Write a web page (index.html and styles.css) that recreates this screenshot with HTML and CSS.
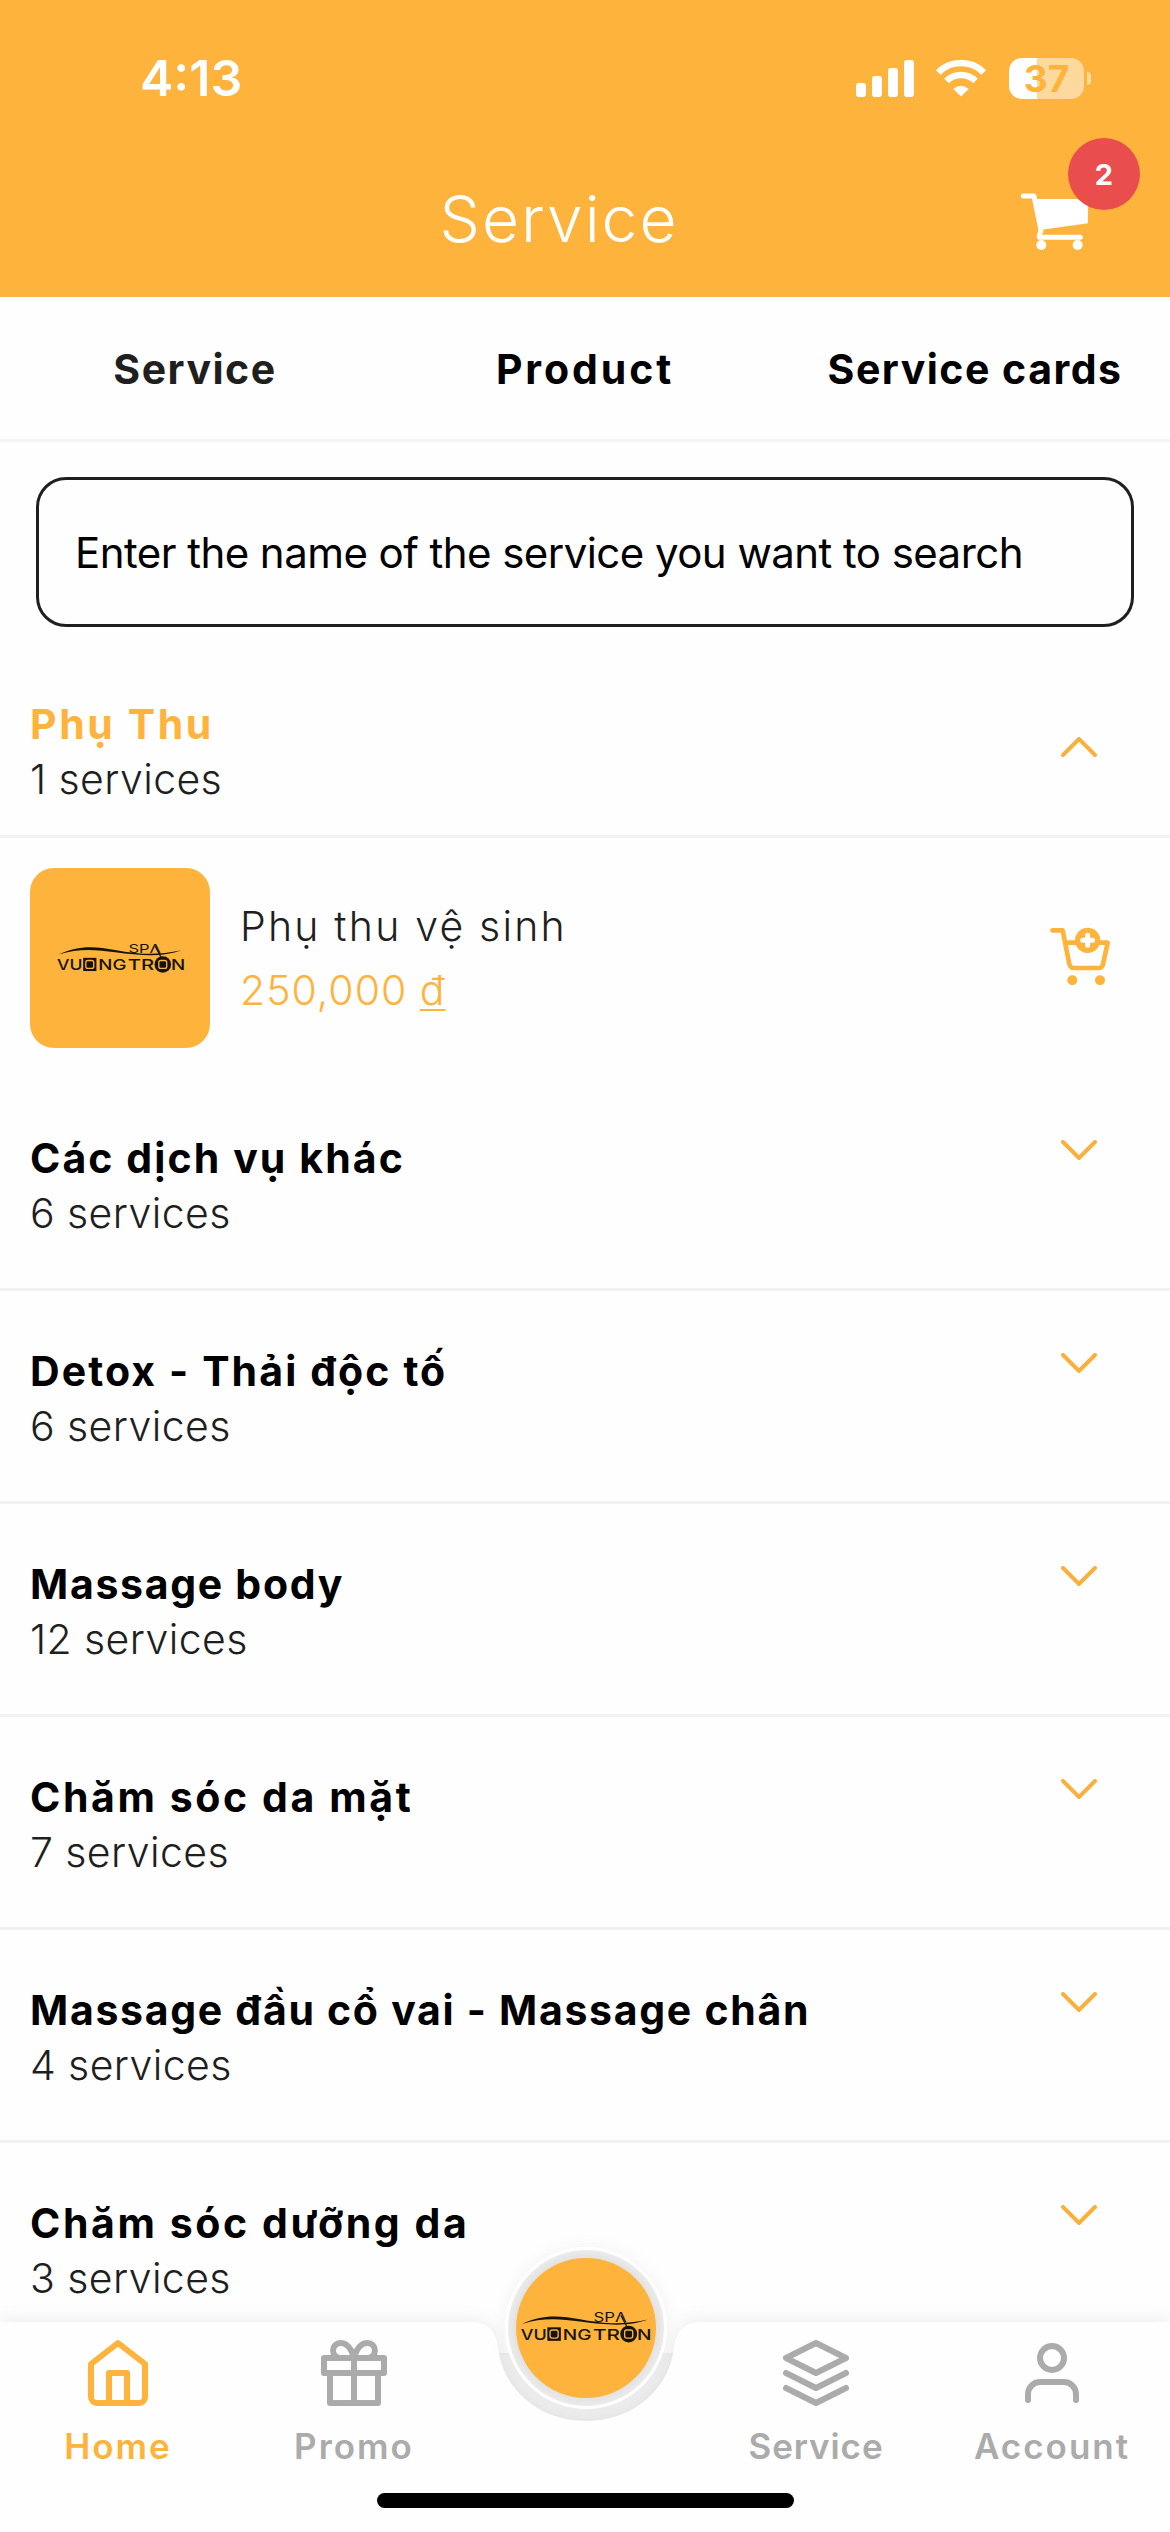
FILE: index.html
```html
<!DOCTYPE html>
<html lang="vi">
<head>
<meta charset="utf-8">
<title>Service</title>
<link rel="stylesheet" href="styles.css">
</head>
<body>
<div class="screen">
  <header class="header">
    <div class="status">
      <span class="time">4:13</span>
      <div class="indicators">
        <svg width="58" height="38" viewBox="0 0 58 38" fill="#fff"><rect y="24" width="10" height="14" rx="3"/><rect x="16" y="17" width="10" height="21" rx="3"/><rect x="32" y="9" width="10" height="29" rx="3"/><rect x="48" y="1" width="10" height="37" rx="3"/></svg>
        <svg class="wifi" width="50" height="38" viewBox="0 0 50 38"><g fill="none" stroke="#fff" stroke-width="6.5"><path d="M2.300 13.500A32 32 0 0 1 47.700 13.500"/><path d="M10.500 22A20.500 20.500 0 0 1 39.500 22"/></g><path d="M25 37.500L17.300 30Q25 23.500 32.700 30Z" fill="#fff"/></svg>
        <div class="battery"><span>37</span></div><i class="tip"></i>
      </div>
    </div>
    <div class="titlebar">
      <h1>Service</h1>
      <div class="cart">
        <svg width="71.300" height="60" viewBox="564 486 214 180"><g fill="none" stroke="#fff" stroke-width="15" stroke-linecap="round" stroke-linejoin="round"><path d="M577 498H609L630 601L625 618"/><path d="M625 622H748"/></g><path d="M612 507H771V580L632 599Z" fill="#fff"/><circle cx="631" cy="645" r="15" fill="#fff"/><circle cx="740" cy="645" r="15" fill="#fff"/></svg>
        <span class="badge">2</span>
      </div>
    </div>
  </header>
  <nav class="tabs"><span class="active">Service</span><span class="wider">Product</span><span>Service cards</span></nav>
  <div class="search"><span>Enter the name of the service you want to search</span></div>
  <main>
    <section class="row open"><div><h2 class="wider">Phụ Thu</h2><p>1 services</p></div><svg class="chev up" width="36" height="20" viewBox="0 0 36 20"><path d="M2 2L18 18L34 2"/></svg></section>
    <section class="item">
      <div class="thumb">
        <svg width="133" height="35" viewBox="44 92 400 106">
          <g id="logo">
            <path d="M54 133C110 104 165 108 225 119C300 133 350 136 426 120C370 142 300 136 225 126C165 117 110 114 54 133Z" fill="#17130a"/>
            <path d="M346 108L366 145" stroke="#17130a" stroke-width="4"/>
            <rect x="128" y="143" width="40" height="40" fill="#17130a"/>
            <circle cx="369" cy="163" r="25" fill="#17130a"/>
            <g class="logo-text">
              <text x="49" y="180" textLength="77" lengthAdjust="spacingAndGlyphs">VU</text>
              <text x="174" y="180" textLength="85" lengthAdjust="spacingAndGlyphs">NG</text>
              <text x="263" y="180" textLength="80" lengthAdjust="spacingAndGlyphs">TR</text>
              <text x="394" y="180" textLength="43" lengthAdjust="spacingAndGlyphs">N</text>
              <text class="logo-spa" x="265" y="127" textLength="98" lengthAdjust="spacingAndGlyphs">SPΛ</text>
            </g>
            <rect x="136" y="151" width="24" height="24" rx="6" fill="none" stroke="#feb33c" stroke-width="4"/>
            <rect x="357" y="151" width="24" height="24" rx="6" fill="none" stroke="#feb33c" stroke-width="4"/>
          </g>
        </svg>
      </div>
      <div class="info"><p class="name">Phụ thu vệ sinh</p><p class="price">250,000 <u>đ</u></p></div>
      <svg class="add" width="62" height="60" viewBox="147 681 186 180"><g fill="none" stroke="#feb33c" stroke-width="14" stroke-linecap="round" stroke-linejoin="round"><path d="M157 691H188L208 792Q211 804 222 804H297Q306 804 309 793L323 728H197"/></g><circle cx="263" cy="721" r="38" fill="#feb33c"/><path d="M263 706V736M248 721H278" stroke="#fff" stroke-width="15" stroke-linecap="round"/><g fill="#feb33c"><circle cx="217" cy="841" r="15"/><circle cx="300" cy="841" r="15"/></g></svg>
    </section>
    <section class="row"><div><h2>Các dịch vụ khác</h2><p>6 services</p></div><svg class="chev" width="36" height="20" viewBox="0 0 36 20"><path d="M2 2L18 18L34 2"/></svg></section>
    <section class="row"><div><h2>Detox - Thải độc tố</h2><p>6 services</p></div><svg class="chev" width="36" height="20" viewBox="0 0 36 20"><path d="M2 2L18 18L34 2"/></svg></section>
    <section class="row"><div><h2 class="tighter">Massage body</h2><p>12 services</p></div><svg class="chev" width="36" height="20" viewBox="0 0 36 20"><path d="M2 2L18 18L34 2"/></svg></section>
    <section class="row"><div><h2 class="wider">Chăm sóc da mặt</h2><p>7 services</p></div><svg class="chev" width="36" height="20" viewBox="0 0 36 20"><path d="M2 2L18 18L34 2"/></svg></section>
    <section class="row"><div><h2 class="tighter">Massage đầu cổ vai - Massage chân</h2><p>4 services</p></div><svg class="chev" width="36" height="20" viewBox="0 0 36 20"><path d="M2 2L18 18L34 2"/></svg></section>
    <section class="row"><div><h2 class="wider">Chăm sóc dưỡng da</h2><p>3 services</p></div><svg class="chev" width="36" height="20" viewBox="0 0 36 20"><path d="M2 2L18 18L34 2"/></svg></section>
  </main>
  <footer class="bottom">
    <svg class="bar" width="1170" height="260" viewBox="0 0 1170 260">
      <path d="M490 84H680V170H490Z" fill="#f3f3f3"/>
      <path class="bar-shape" d="M0 50H472C488 50 496 60 498 75C502 115 537 149 586 149C635 149 670 115 674 75C676 60 684 50 700 50H1170V260H0Z"/>
    </svg>
    <div class="center"><div class="disc"><svg width="135" height="36" viewBox="44 92 400 106"><use href="#logo"/></svg></div></div>
    <div class="links">
      <a class="link on"><svg viewBox="0 0 24 24"><path d="M3 9l9-7 9 7v11a2 2 0 0 1-2 2H5a2 2 0 0 1-2-2z"/><path d="M9 22V12h6v10"/></svg><span>Home</span></a>
      <a class="link"><svg viewBox="0 0 24 24"><path d="M20 12v10H4V12"/><path d="M2 7h20v5H2zM12 22V7"/><path d="M12 7H7.500a2.500 2.500 0 0 1 0-5C11 2 12 7 12 7zM12 7h4.500a2.500 2.500 0 0 0 0-5C13 2 12 7 12 7z"/></svg><span>Promo</span></a>
      <i></i>
      <a class="link"><svg viewBox="0 0 24 24"><path d="M12 2L2 7l10 5 10-5-10-5zM2 17l10 5 10-5M2 12l10 5 10-5"/></svg><span class="tighter">Service</span></a>
      <a class="link"><svg viewBox="0 0 24 24"><path d="M20 21v-2a4 4 0 0 0-4-4H8a4 4 0 0 0-4 4v2"/><circle cx="12" cy="7" r="4"/></svg><span>Account</span></a>
    </div>
    <div class="home-indicator"></div>
  </footer>
</div>
</body>
</html>
```
FILE: styles.css
```css
* { box-sizing: border-box; margin: 0; padding: 0; }
body { width: 1170px; height: 2532px; overflow: hidden; background: #fefefe; font-family: Inter, "Noto Sans", sans-serif; color: #000; }
svg { display: block; flex: none; }
.logo-text { fill: #17130a; font-family: Inter, sans-serif; font-size: 44px; font-weight: 500; }
.logo-spa { font-size: 37px; font-weight: 400; }
.screen { position: relative; height: 2532px; overflow: hidden; }

.header { height: 297px; background: #feb33c; color: #fff; }
.status { height: 156px; padding: 0 79px 0 140px; display: flex; justify-content: space-between; align-items: center; }
.time { font-size: 50px; font-weight: 600; }
.indicators { display: flex; align-items: center; }
.wifi { margin-left: 22px; }
.battery { margin-left: 23px; width: 75px; height: 41px; border-radius: 13px; background: linear-gradient(90deg, #fff 28px, #fed99d 28px); color: #feb33c; font-size: 37px; font-weight: 700; line-height: 41px; text-align: center; }
.tip { width: 4px; height: 13px; margin-left: 3px; border-radius: 0 4px 4px 0; background: #fed99d; }
.titlebar { height: 141px; display: grid; grid-template-columns: 1118px 52px; }
.titlebar h1 { text-align: center; font-size: 64px; font-weight: 300; line-height: 126px; letter-spacing: 2px; }
.cart { position: relative; }
.cart svg { position: absolute; right: 80px; top: 36px; }
.badge { position: absolute; right: 30px; top: -18px; width: 72px; height: 72px; border-radius: 50%; background: #e94d4d; font-size: 29px; font-weight: 700; line-height: 73px; text-align: center; }

.tabs { height: 145px; border-bottom: 3px solid #f3f3f3; display: grid; grid-template-columns: repeat(3, 1fr); text-align: center; font-size: 41px; font-weight: 700; line-height: 144px; letter-spacing: 1.5px; }
.tabs .active { color: #1f1f1f; }
.tabs .wider { letter-spacing: 2.9px; }
.search { margin: 35px 36px 17px; height: 150px; border: 3px solid #201f20; border-radius: 30px; padding-left: 36px; font-size: 42px; line-height: 146px; letter-spacing: -.55px; white-space: nowrap; }

.row { height: 213px; border-bottom: 3px solid #f1f1f1; padding: 53px 73px 0 30px; display: flex; justify-content: space-between; }
.row h2 { font-size: 41px; font-weight: 700; line-height: 55px; letter-spacing: 2.1px; }
.row .tighter { letter-spacing: 1.7px; }
.row .wider { letter-spacing: 2.6px; }
.row p, .info p { font-size: 41px; font-weight: 330; line-height: 55px; color: #1f1f1f; letter-spacing: .4px; }
.chev { margin-top: 9px; fill: none; stroke: #fab03c; stroke-width: 4; stroke-linecap: round; }
.open { height: 194px; }
.open h2 { color: #feb33c; }
.up { margin-top: 40px; transform: rotate(180deg); }
.item { height: 240px; padding: 30px 59px 0 30px; display: flex; align-items: flex-start; }
.thumb { width: 180px; height: 180px; border-radius: 24px; background: #feb33c; display: flex; align-items: center; justify-content: center; padding-left: 2px; }
.info { flex: 1; padding: 31px 0 0 30px; }
.info .name { letter-spacing: 2.2px; }
.info .price { margin-top: 9px; color: #feb33c; letter-spacing: 1px; }
.price u { text-decoration-thickness: 2px; text-underline-offset: 4px; }
.add { margin-top: 59px; }

.bottom { position: absolute; left: 0; bottom: 0; width: 1170px; height: 260px; }
.bar { position: absolute; inset: 0; }
.bar-shape { fill: #fefefe; filter: drop-shadow(0 0 9px rgba(0, 0, 0, .09)); }
.center { position: absolute; left: 505px; top: -25px; width: 162px; height: 162px; border-radius: 50%; border: 3px solid #fff; background: radial-gradient(circle, #e2e2e2 70px, #eeeeee 80px); display: flex; align-items: center; justify-content: center; box-shadow: 0 0 18px rgba(0, 0, 0, .05); }
.disc { width: 140px; height: 140px; border-radius: 50%; background: #feb33c; display: flex; align-items: center; justify-content: center; }
.links { position: relative; height: 200px; margin-top: 50px; display: grid; grid-template-columns: 236px 236px 226px 236px 236px; }
.link { display: flex; flex-direction: column; align-items: center; padding-top: 15px; color: #ababab; font-size: 35px; font-weight: 560; line-height: 44px; letter-spacing: 2px; }
.link svg { width: 72px; height: 72px; fill: none; stroke: currentColor; stroke-width: 2; stroke-linecap: round; stroke-linejoin: round; }
.link span { margin-top: 15px; }
.link .tighter { letter-spacing: .9px; }
.on { color: #feb33c; }
.home-indicator { position: absolute; left: 377px; bottom: 24px; width: 417px; height: 15px; border-radius: 8px; background: #000; }
```
